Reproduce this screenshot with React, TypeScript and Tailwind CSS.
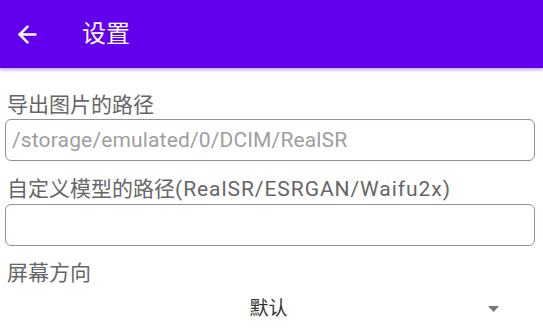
import { ArrowLeft } from 'lucide-react';

const font = { fontFamily: 'Roboto, "Noto Sans CJK SC", sans-serif' };

export default function App() {
  return (
    <main className="w-[543px] h-[334px] overflow-hidden bg-white" style={font}>
      {/* Toolbar */}
      <header className="h-[68px] bg-[#6200ee] flex items-center shadow-[0_2px_3px_rgba(98,0,238,0.35)] relative z-10">
        <ArrowLeft className="ml-[14px] text-white" size={27} strokeWidth={2.2} />
        <h1 className="ml-[41px] text-white text-[24px] leading-none pb-px">设置</h1>
      </header>

      {/* Settings */}
      <section className="px-[5px]">
        <label className="block mt-[23px] pl-[2px] text-[21px] leading-[28px] text-[#666666]">导出图片的路径</label>
        <input
          className="block w-[530px] h-[42px] px-[6px] border border-[#8d91ab] rounded-[6px] text-[21px] tracking-[0.15px] text-[#333] placeholder:text-[#9e9e9e] outline-none"
          placeholder="/storage/emulated/0/DCIM/RealSR"
        />

        <label className="block mt-[14px] pl-[2px] text-[21px] leading-[29px] text-[#666666]">
          自定义模型的路径<span className="tracking-[0.95px]">(RealSR/ESRGAN/Waifu2x)</span>
        </label>
        <input className="block w-[530px] h-[42px] px-[6px] border border-[#8d91ab] rounded-[6px] text-[21px] outline-none" />

        <label className="block mt-[13px] pl-[2px] text-[21px] leading-[28px] text-[#666666]">屏幕方向</label>
        <div className="flex items-center h-[44px]">
          <span className="flex-1 text-center text-[19px] text-[#333333] pl-[44px]">默认</span>
          <svg width="11" height="6" viewBox="0 0 11 6" className="mr-[39px]">
            <path d="M0 0h11L5.5 6z" fill="#777777" />
          </svg>
        </div>
      </section>
    </main>
  );
}
